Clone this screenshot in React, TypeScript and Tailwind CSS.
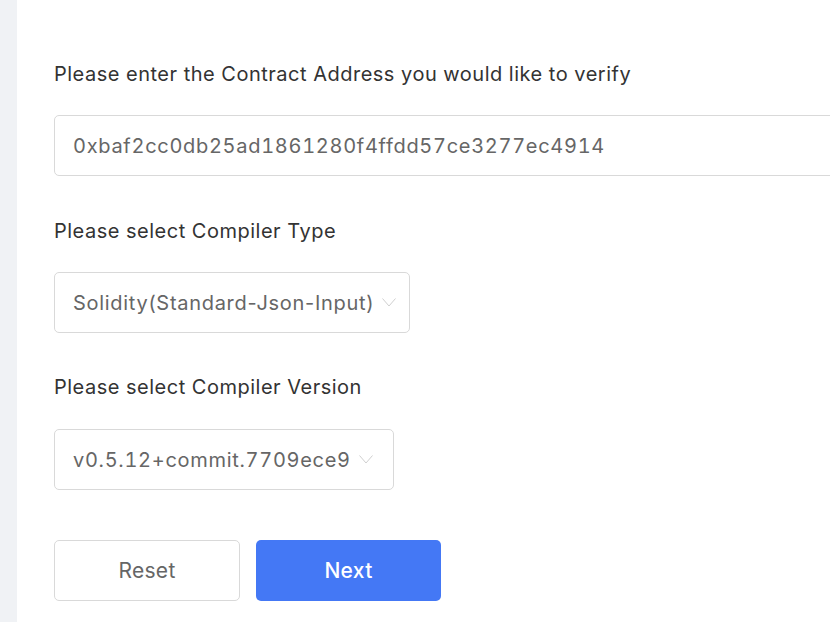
import React from 'react';

const Chevron: React.FC = () => (
  <svg width="14" height="9" viewBox="0 0 14 9" fill="none" className="shrink-0">
    <path d="M0.5 0.5 L7 8 L13.5 0.5" stroke="#cfcfcf" strokeWidth="1" />
  </svg>
);

const Select: React.FC<{ value: string; width: string; nums?: boolean }> = ({ value, width, nums }) => (
  <div
    className={`flex h-[61px] items-center gap-[8px] rounded-[5px] border border-[#d9d9d9] bg-white pl-[18px] ${width}`}
  >
    <span className={`text-[20px] tracking-[0.7px] text-[#666] ${nums ? 'tabular-nums' : ''}`}>{value}</span>
    <Chevron />
  </div>
);

export default function App() {
  return (
    <div
      className="flex h-[622px] w-[830px] overflow-hidden bg-white"
      style={{ fontFamily: 'Inter, "Noto Sans", sans-serif' }}
    >
      <div className="w-[17px] shrink-0 bg-[#f0f2f5]" />
      <div className="flex-1 pl-[37px] pt-[62px]">
        <p className="text-[20px] leading-[24px] tracking-[0.5px] text-[#333]">
          Please enter the Contract Address you would like to verify
        </p>
        <div className="mt-[29px] flex h-[61px] w-[820px] items-center rounded-[5px] border border-[#d9d9d9] pl-[18px]">
          <span className="text-[20px] tracking-[0.7px] text-[#666] tabular-nums">
            0xbaf2cc0db25ad1861280f4ffdd57ce3277ec4914
          </span>
        </div>

        <p className="mt-[43px] text-[20px] leading-[24px] tracking-[0.5px] text-[#333]">
          Please select Compiler Type
        </p>
        <div className="mt-[29px]">
          <Select value="Solidity(Standard-Json-Input)" width="w-[356px]" />
        </div>

        <p className="mt-[42px] text-[20px] leading-[24px] tracking-[0.5px] text-[#333]">
          Please select Compiler Version
        </p>
        <div className="mt-[30px]">
          <Select value="v0.5.12+commit.7709ece9" width="w-[340px]" nums />
        </div>

        <div className="mt-[50px] flex gap-[16px]">
          <button className="h-[61px] w-[186px] rounded-[5px] border border-[#d9d9d9] bg-white text-[21px] tracking-[0.3px] text-[#666]">
            Reset
          </button>
          <button className="h-[61px] w-[185px] rounded-[5px] bg-[#4478f5] text-[21px] font-medium tracking-[0.3px] text-white">
            Next
          </button>
        </div>
      </div>
    </div>
  );
}
